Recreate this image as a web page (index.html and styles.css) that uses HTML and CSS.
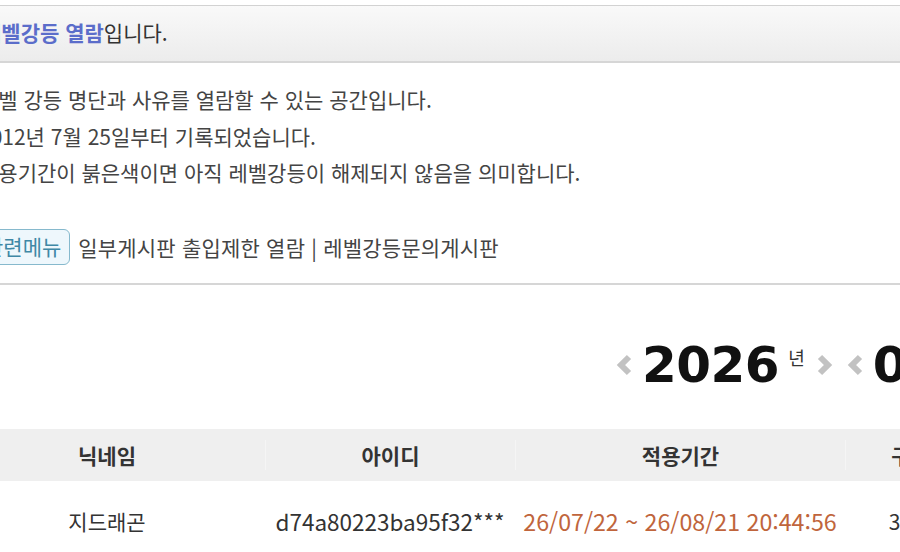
FILE: index.html
```html
<!DOCTYPE html>
<html lang="ko">
<head>
    <meta charset="UTF-8">
    <meta name="viewport" content="width=device-width, initial-scale=1.0">
    <title>레벨강등 열람</title>
    <link rel="stylesheet" href="styles.css">
</head>
<body>
    <div class="page">
        <div class="title-bar">
            <span class="highlight">레벨강등 열람</span>입니다.
        </div>

        <div class="intro">
            <p>레벨 강등 명단과 사유를 열람할 수 있는 공간입니다.</p>
            <p>2012년 7월 25일부터 기록되었습니다.</p>
            <p>적용기간이 붉은색이면 아직 레벨강등이 해제되지 않음을 의미합니다.</p>
            <div class="menu">
                <span class="menu-label">관련메뉴</span>
                <span class="menu-links">일부게시판 출입제한 열람 | 레벨강등문의게시판</span>
            </div>
        </div>

        <div class="date-nav">
            <svg class="arrow" width="16" height="22" viewBox="0 0 16 22"><polyline points="13,3 5,11 13,19" /></svg>
            <span class="year">2026</span>
            <span class="unit">년</span>
            <svg class="arrow arrow-next" width="16" height="22" viewBox="0 0 16 22"><polyline points="3,3 11,11 3,19" /></svg>
            <svg class="arrow arrow-gap" width="16" height="22" viewBox="0 0 16 22"><polyline points="13,3 5,11 13,19" /></svg>
            <span class="year">07</span>
            <span class="unit">월</span>
        </div>

        <div class="board">
            <div class="board-head">
                <div class="cell">닉네임</div>
                <div class="cell">아이디</div>
                <div class="cell">적용기간</div>
                <div class="cell">구분</div>
            </div>
            <div class="board-row">
                <div class="cell">지드래곤</div>
                <div class="cell latin">d74a80223ba95f32***</div>
                <div class="cell latin period">26/07/22 ~ 26/08/21 20:44:56</div>
                <div class="cell">30일</div>
            </div>
        </div>
    </div>
</body>
</html>
```
FILE: styles.css
```css
html, body {
    margin: 0;
    padding: 0;
    background: #fff;
    overflow: hidden;
}
body {
    font-family: "Noto Sans CJK KR", "Noto Sans", sans-serif;
    font-size: 21px;
    color: #444;
}
.page {
    margin-left: -21px; /* page is wider than the view, left edge is cut */
    width: 1000px;
}
.title-bar {
    margin-top: 5px;
    height: 55px;
    line-height: 52px;
    padding-left: 3px;
    border-top: 1px solid #d2d2d2;
    border-bottom: 2px solid #d6d6d6;
    background: linear-gradient(#f9f9f9, #ececec);
    color: #333;
}
.highlight {
    color: #5b6dca;
    font-weight: bold;
}
.intro {
    padding: 18px 0 18px;
    border-bottom: 2px solid #d6d6d6;
}
.intro p {
    margin: 0;
    line-height: 36.5px;
}
.menu {
    display: flex;
    align-items: center;
    margin-top: 38px;
    height: 36px;
}
.menu-label {
    box-sizing: border-box;
    height: 36px;
    line-height: 33px;
    padding: 0 8px 0 4px;
    margin-right: 8px;
    background: #eef7fc;
    border: 1px solid #86b9cd;
    border-radius: 6px;
    color: #3f88a6;
}
.menu-links {
    letter-spacing: 0.2px;
}
.date-nav {
    display: flex;
    align-items: center;
    height: 60px;
    margin-top: 50px;
    padding-left: 637px;
}
.arrow {
    flex: none;
}
.arrow polyline {
    fill: none;
    stroke: #c2c2c2;
    stroke-width: 6;
    stroke-linejoin: miter;
}
.year {
    margin-left: 10px;
    font-family: "DejaVu Sans", sans-serif;
    font-weight: bold;
    font-size: 50px;
    line-height: 60px;
    color: #111;
    letter-spacing: -0.5px;
}
.unit {
    align-self: flex-start;
    margin: 9px 0 0 9px;
    font-size: 18px;
    color: #333;
}
.arrow-next {
    margin-left: 12px;
}
.arrow-gap {
    margin-left: 14px;
}
.board {
    margin-top: 34px;
    margin-left: -30px;
}
.board-head, .board-row {
    display: grid;
    grid-template-columns: 316px 250px 330px 130px;
    align-items: center;
    text-align: center;
}
.board-head {
    height: 52px;
    background: #efefef;
    font-weight: bold;
    color: #333;
}
.board-head .cell + .cell {
    border-left: 1px solid #f5f5f5;
}
.board-row {
    height: 80px;
    color: #333;
}
.latin {
    font-size: 22.5px;
}
.period {
    font-size: 23.2px;
    color: #c0653c;
}
```
